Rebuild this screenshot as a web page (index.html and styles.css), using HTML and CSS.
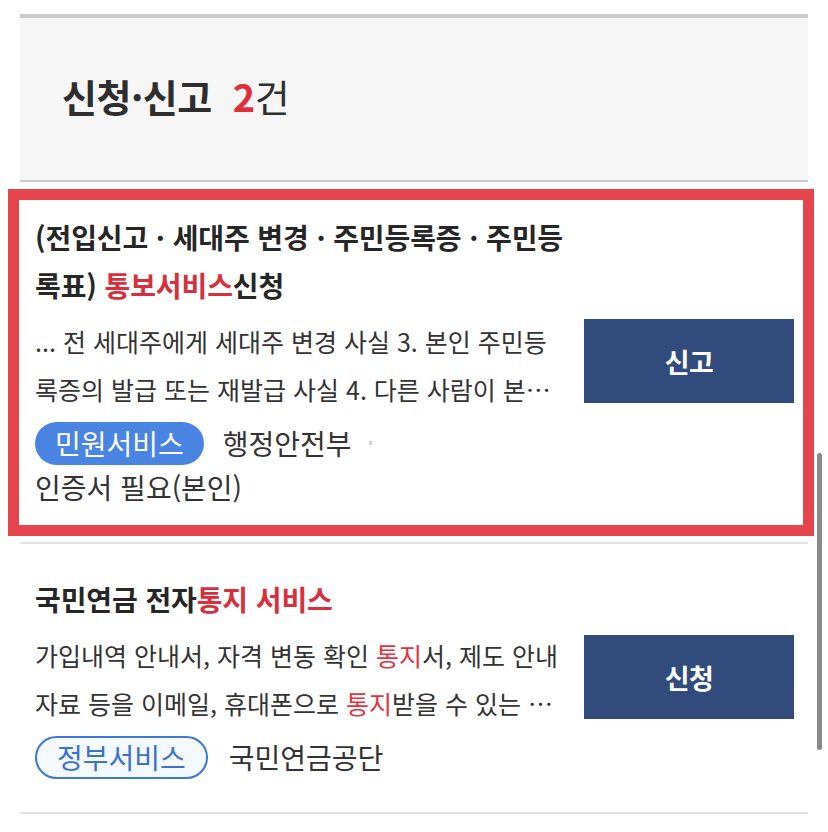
FILE: index.html
```html
<!DOCTYPE html>
<html lang="ko">
<head>
<meta charset="utf-8">
<title>신청·신고</title>
<link rel="stylesheet" href="styles.css">
</head>
<body>
<section class="result">
  <header class="result-head">
    <h2 class="result-title">신청·신고<span class="count"><em>2</em>건</span></h2>
  </header>
  <ul class="result-list">
    <li class="item is-focused">
      <div class="item-body">
        <h3 class="item-title"><span class="line">(전입신고 · 세대주 변경 · 주민등록증 · 주민등</span><span class="line">록표) <mark>통보서비스</mark>신청</span></h3>
        <p class="item-desc"><span class="line">... 전 세대주에게 세대주 변경 사실 3. 본인 주민등</span><span class="line">록증의 발급 또는 재발급 사실 4. 다른 사람이 본…</span></p>
        <div class="item-meta">
          <span class="badge badge-fill">민원서비스</span>
          <span class="org">행정안전부</span>
          <span class="sep"></span>
          <span class="note">인증서 필요(본인)</span>
        </div>
      </div>
      <button class="action" type="button">신고</button>
    </li>
    <li class="item">
      <div class="item-body">
        <h3 class="item-title"><span class="line">국민연금 전자<mark>통지 서비스</mark></span></h3>
        <p class="item-desc"><span class="line">가입내역 안내서, 자격 변동 확인 <mark>통지</mark>서, 제도 안내</span><span class="line">자료 등을 이메일, 휴대폰으로 <mark>통지</mark>받을 수 있는 …</span></p>
        <div class="item-meta">
          <span class="badge badge-line">정부서비스</span>
          <span class="org">국민연금공단</span>
        </div>
      </div>
      <button class="action" type="button">신청</button>
    </li>
  </ul>
  <div class="scroll-thumb"></div>
</section>
</body>
</html>
```
FILE: styles.css
```css
* { box-sizing: border-box; }

html, body { background: #ffffff; }

body {
  margin: 0;
  padding: 14px 20px 0 20px;
  font-family: "Noto Sans CJK KR", "Noto Sans", sans-serif;
  color: #333333;
}

.result-head {
  height: 168px;
  border-top: 4px solid #cbcbcb;
  border-bottom: 2px solid #cbcbcb;
  background: #f6f6f6;
  display: flex;
  align-items: center;
  padding: 0 0 6px 42px;
}

.result-title {
  margin: 0;
  font-size: 38px;
  font-weight: 700;
  color: #2e2e2e;
  letter-spacing: -0.5px;
  line-height: 1;
}

.count {
  margin-left: 21px;
  font-weight: 400;
}

.count em {
  font-style: normal;
  font-weight: 700;
  color: #de2f3b;
}

.result-list {
  list-style: none;
  margin: 0;
  padding: 0;
}

.item {
  position: relative;
  display: flex;
  align-items: center;
  padding: 31px 14px 33px 15px;
  border-bottom: 2px solid #e3e3e3;
}

.item.is-focused::after {
  content: "";
  position: absolute;
  left: -12px;
  right: -6px;
  top: 7px;
  bottom: 6px;
  border: 11px solid #e5464d;
  pointer-events: none;
}

.item-body {
  flex: 1;
  min-width: 0;
}

.line {
  display: block;
  white-space: nowrap;
}

.item-title {
  margin: 0;
  font-size: 28px;
  font-weight: 700;
  line-height: 48px;
  color: #262626;
  letter-spacing: -0.1px;
}

mark {
  background: none;
  color: #d7303d;
}

.item-desc {
  margin: 8px 0 0;
  font-size: 25px;
  line-height: 48px;
  color: #333333;
  letter-spacing: 0;
}

.item-desc mark {
  color: #e0333d;
}

.item-meta {
  margin-top: 8px;
  display: flex;
  flex-wrap: wrap;
  align-items: center;
  font-size: 28px;
  line-height: 44px;
  color: #333333;
}

.badge {
  display: inline-flex;
  align-items: center;
  justify-content: center;
  height: 43px;
  padding: 0 20px;
  border-radius: 22px;
  line-height: 1;
}

.badge-fill {
  background: #4a84e2;
  color: #ffffff;
}

.badge-line {
  border: 2px solid #3c78d6;
  background: #f4f8ff;
  color: #3a72cc;
}

.org {
  margin-left: 19px;
}

.badge-line + .org {
  margin-left: 21px;
}

.sep {
  width: 3px;
  height: 4px;
  margin-left: 17px;
  background: #d0d0d0;
}

.note {
  flex-basis: 100%;
}

.action {
  flex: none;
  width: 210px;
  height: 84px;
  margin-left: 20px;
  border: 0;
  background: #304b7c;
  color: #ffffff;
  font-family: inherit;
  font-size: 27px;
  font-weight: 700;
  letter-spacing: -0.5px;
}

.scroll-thumb {
  position: absolute;
  left: 817px;
  top: 453px;
  width: 5px;
  height: 297px;
  border-radius: 3px;
  background: #8a8a8a;
}
```
